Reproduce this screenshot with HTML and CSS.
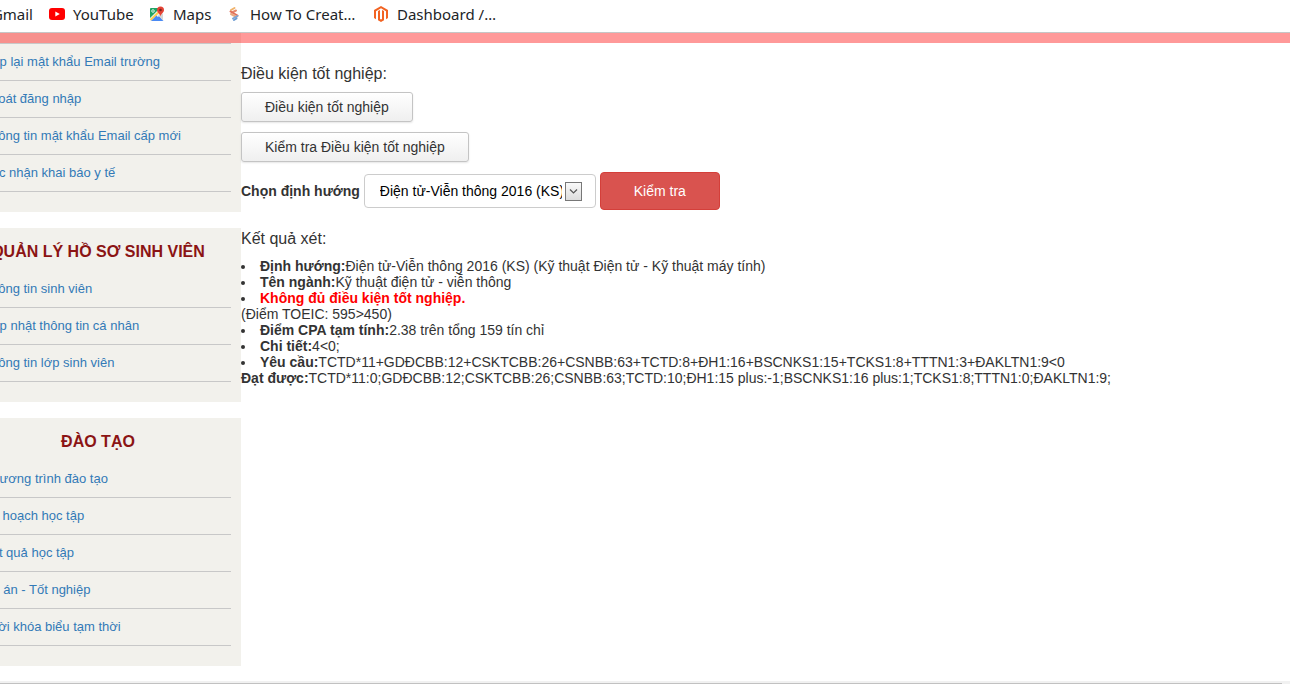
FILE: index.html
```
<!DOCTYPE html>
<html lang="vi">
<head>
<meta charset="utf-8">
<title>Điều kiện tốt nghiệp</title>
<link rel="stylesheet" href="styles.css">
</head>
<body>
<nav class="bookmarks">
  <a class="bookmark bookmark-gmail" href="#">Gmail</a>
  <a class="bookmark bookmark-youtube" href="#">
    <svg class="favicon" viewBox="0 0 16 16"><rect y="2" width="16" height="12" rx="3" fill="#f00"/><path d="M6.3 5.4v5.2L10.8 8z" fill="#fff"/></svg>YouTube</a>
  <a class="bookmark bookmark-maps" href="#">
    <svg class="favicon" viewBox="0 0 16 16"><rect x="1" y="2" width="13" height="13" rx="1" fill="#f1f1f1"/><path d="M1 3q0-1 1-1h9L1 12z" fill="#1fa463"/><path d="M5 15l5-5 4.500 5z" fill="#4a8af4"/><path d="M1.500 14L12 4" stroke="#ffd04b" stroke-width="1.800"/><path d="M2 15l5.500-5.500L12 15z" fill="#4a8af4"/><path d="M9 9l5 5.500V8z" fill="#d5d5d5"/><circle cx="4" cy="5" r="1.300" fill="none" stroke="#fff" stroke-width=".8"/><path d="M11.500 10.500C11.200 7.500 8 7 8 4a3.500 3.500 0 017 0c0 3-3.200 3.500-3.500 6.500z" fill="#e54335"/><circle cx="11.500" cy="4" r="1.300" fill="#7b231e"/></svg>Maps</a>
  <a class="bookmark bookmark-howto" href="#">
    <svg class="favicon" viewBox="0 0 16 16" fill="none" stroke-width="2" stroke-linecap="round"><path d="M8.500 2L5 4" stroke="#f0b36b"/><path d="M10 4.500L6 6.500" stroke="#e58a6f"/><path d="M4.500 5.500l7 4" stroke="#e2705a"/><path d="M5 8l5.500 3" stroke="#eaa880"/><path d="M11.500 10L7 12.500" stroke="#7ba6d8"/><path d="M10.500 12.500L8 14" stroke="#6c9bd2"/></svg>How To Creat…</a>
  <a class="bookmark" href="#">
    <svg class="favicon" viewBox="0 0 16 16"><path d="M8 0l7 4v8l-2 1.200V5.200L8 2.300 3 5.200v8L1 12V4z" fill="#f26322"/><path d="M5 5l2-1.100v9.100l1 .6 1-.6V3.900L11 5v9.200L8 16l-3-1.800z" fill="#f26322"/></svg>Dashboard /…</a>
</nav>
<div class="page">
  <div class="top-stripe"></div>
  <aside class="sidebar">
    <section class="panel panel-continued">
      <ul class="menu">
        <li><a href="#">Cấp lại mật khẩu Email trường</a></li>
        <li><a href="#">Thoát đăng nhập</a></li>
        <li><a href="#">Thông tin mật khẩu Email cấp mới</a></li>
        <li><a href="#">Xác nhận khai báo y tế</a></li>
      </ul>
    </section>
    <section class="panel">
      <h2 class="panel-title">QUẢN LÝ HỒ SƠ SINH VIÊN</h2>
      <ul class="menu">
        <li><a href="#">Thông tin sinh viên</a></li>
        <li><a href="#">Cập nhật thông tin cá nhân</a></li>
        <li><a href="#">Thông tin lớp sinh viên</a></li>
      </ul>
    </section>
    <section class="panel">
      <h2 class="panel-title">ĐÀO TẠO</h2>
      <ul class="menu">
        <li><a href="#">Chương trình đào tạo</a></li>
        <li><a href="#">Kế hoạch học tập</a></li>
        <li><a href="#">Kết quả học tập</a></li>
        <li><a href="#">Đồ án - Tốt nghiệp</a></li>
        <li><a href="#">Thời khóa biểu tạm thời</a></li>
      </ul>
    </section>
  </aside>
  <main class="content">
    <h1 class="content-title">Điều kiện tốt nghiệp:</h1>
    <div class="actions">
      <button class="btn" type="button">Điều kiện tốt nghiệp</button>
      <button class="btn" type="button">Kiểm tra Điều kiện tốt nghiệp</button>
    </div>
    <form class="check-form">
      <label class="check-label" for="track">Chọn định hướng</label>
      <span class="select-box">
        <select class="select" id="track"><option>Điện tử-Viễn thông 2016 (KS)</option></select>
        <svg class="select-arrow" viewBox="0 0 17 19"><defs><linearGradient id="arrow-fill" x2="0" y2="1"><stop stop-color="#fafafa"/><stop offset="1" stop-color="#dcdcdc"/></linearGradient></defs><rect x=".5" y=".5" width="16" height="18" fill="url(#arrow-fill)" stroke="#777"/><path d="M5 7.500l3.500 3.500L12 7.500" fill="none" stroke="#555" stroke-width="1.200"/></svg>
      </span>
      <button class="btn-check" type="button">Kiểm tra</button>
    </form>
    <h2 class="content-title">Kết quả xét:</h2>
    <ul class="results">
      <li><b>Định hướng:</b>Điện tử-Viễn thông 2016 (KS) (Kỹ thuật Điện tử - Kỹ thuật máy tính)</li>
      <li><b>Tên ngành:</b>Kỹ thuật điện tử - viễn thông</li>
      <li><b class="failed">Không đủ điều kiện tốt nghiệp.</b><div>(Điểm TOEIC: 595&gt;450)</div></li>
      <li><b>Điểm CPA tạm tính:</b>2.38 trên tổng 159 tín chỉ</li>
      <li><b>Chi tiết:</b>4&lt;0;</li>
      <li><b>Yêu cầu:</b>TCTD*11+GDĐCBB:12+CSKTCBB:26+CSNBB:63+TCTD:8+ĐH1:16+BSCNKS1:15+TCKS1:8+TTTN1:3+ĐAKLTN1:9&lt;0<div><b>Đạt được:</b>TCTD*11:0;GDĐCBB:12;CSKTCBB:26;CSNBB:63;TCTD:10;ĐH1:15 plus:-1;BSCNKS1:16 plus:1;TCKS1:8;TTTN1:0;ĐAKLTN1:9;</div></li>
    </ul>
  </main>
</div>
<div class="scroll-track"><div class="scroll-thumb"></div></div>
</body>
</html>
```
FILE: styles.css
```
* { box-sizing: border-box; }

body {
  margin: 0;
  display: flex;
  flex-direction: column;
  height: 100vh;
  overflow: hidden;
  background: #fff;
  color: #333;
  font: 14px/16px "Liberation Sans", Arial, sans-serif;
}

h1, h2, ul { margin: 0; padding: 0; }
a { text-decoration: none; }

.bookmarks {
  display: flex;
  flex: none;
  height: 33px;
  padding-bottom: 4px;
  border-bottom: 1px solid #c6c6c6;
  font: 15px/28px "Noto Sans", "Open Sans", sans-serif;
}
.bookmark {
  display: flex;
  align-items: center;
  flex: none;
  gap: 8px;
  color: #222427;
  white-space: nowrap;
}
.bookmark-gmail { width: 49px; justify-content: flex-end; padding-right: 16px; }
.bookmark-youtube { width: 100px; }
.bookmark-maps { width: 77px; }
.bookmark-howto { width: 147px; }
.favicon { flex: none; width: 16px; height: 16px; }

.page {
  position: relative;
  display: flex;
  flex: 1;
  min-height: 0;
}
.top-stripe {
  position: absolute;
  top: 0;
  left: 0;
  right: 0;
  height: 10px;
  background: rgba(255, 0, 0, 0.4);
}

/* The sidebar runs past the left edge of the scrolled window. */
.sidebar {
  display: flex;
  flex-direction: column;
  flex: none;
  gap: 16px;
  width: 286px;
  margin-left: -45px;
}
.panel { padding: 0 10px 20px; background: #f2f1ec; }
.panel-continued { padding-top: 10px; }
.panel-continued .menu { border-top: 1px solid #c8c8c8; }
.panel-title {
  padding: 13px 0 8px;
  color: #8b1414;
  font-size: 16px;
  line-height: 22px;
  text-align: center;
}
.menu { list-style: none; }
.menu li {
  padding-left: 18px;
  border-bottom: 1px solid #c8c8c8;
  font-size: 13px;
  line-height: 36px;
}
.menu a { color: #337ab7; }

.content { flex: 1; min-width: 0; padding-top: 31px; }
.content-title { font-size: 16px; font-weight: 400; line-height: 20px; }

.actions {
  display: flex;
  flex-direction: column;
  align-items: flex-start;
  gap: 10px;
  margin: 8px 0 10px;
}
.btn {
  height: 30px;
  padding: 0 23px;
  border: 1px solid #c4c4c4;
  border-radius: 3px;
  background: linear-gradient(#fff, #efefef);
  box-shadow: 0 1px 2px rgba(0, 0, 0, 0.1);
  color: #333;
  font: inherit;
}

.check-form {
  display: flex;
  align-items: center;
  gap: 4px;
  margin-bottom: 19px;
}
.check-label { font-weight: 700; }
.select-box { position: relative; display: flex; }
.select {
  width: 232px;
  height: 34px;
  padding: 0 33px 0 15px;
  border: 1px solid #ccc;
  border-radius: 4px;
  background: #fff;
  color: #000;
  font: inherit;
  appearance: none;
}
.select-arrow {
  position: absolute;
  top: 8px;
  right: 14px;
  width: 17px;
  height: 19px;
  pointer-events: none;
}
.btn-check {
  width: 120px;
  height: 38px;
  border: 1px solid #d43f3a;
  border-radius: 4px;
  background: #d9534f;
  color: #fff;
  font: inherit;
}

.results { margin-top: 9px; list-style: disc inside; }
.failed { color: #f00; }

.scroll-track {
  flex: none;
  height: 3px;
  padding: 2px 8px 0 0;
  background: #f1f1f1;
}
.scroll-thumb { height: 1px; background: #c1c1c1; }
```
